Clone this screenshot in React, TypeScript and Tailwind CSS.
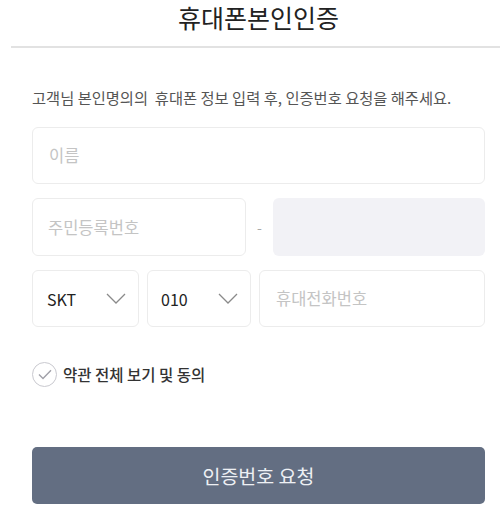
import React from "react";

const Chevron = () => (
  <svg width="20" height="11" viewBox="0 0 20 11" fill="none">
    <polyline points="1,1 10,10 19,1" stroke="#8a8a8a" strokeWidth="1.3" fill="none" />
  </svg>
);

export default function App() {
  return (
    <div
      className="w-[500px] h-[519px] bg-white overflow-hidden"
      style={{ fontFamily: '"Noto Sans CJK KR", "Noto Sans", sans-serif' }}
    >
      <div className="pl-[32px] pr-[15px]">
        <div className="h-[35px] text-center text-[25px] leading-[35px] text-[#222]">
          휴대폰본인인증
        </div>
      </div>
      <div className="ml-[11px] mt-[11px] h-[2px] bg-[#e2e2e2]" />
      <div className="pl-[32px] pr-[15px]">
        <div className="mt-[39px] h-[20px] leading-[20px] text-[15.3px] text-[#555] whitespace-nowrap">
          고객님 본인명의의&nbsp; 휴대폰 정보 입력 후, 인증번호 요청을 해주세요.
        </div>
        <div className="mt-[20px] h-[57px] rounded-[6px] border border-[#ececec] flex items-center pl-[16px] text-[16.5px] text-[#c4c4c4]">
          이름
        </div>
        <div className="mt-[14px] flex items-center h-[58px]">
          <div className="w-[214px] h-full rounded-[6px] border border-[#ececec] flex items-center pl-[15px] text-[16.5px] text-[#c4c4c4]">
            주민등록번호
          </div>
          <div className="w-[27px] flex justify-center text-[14px] text-[#aaa]">-</div>
          <div className="flex-1 h-full rounded-[6px] bg-[#f2f2f6]" />
        </div>
        <div className="mt-[14px] flex h-[57px] gap-[8px]">
          <div className="w-[107px] h-full rounded-[6px] border border-[#ececec] flex items-center justify-between pl-[14px] pr-[12px] text-[16px] text-[#222]">
            <span>SKT</span>
            <Chevron />
          </div>
          <div className="w-[104px] h-full rounded-[6px] border border-[#ececec] flex items-center justify-between pl-[13px] pr-[12px] text-[16px] text-[#222]">
            <span>010</span>
            <Chevron />
          </div>
          <div className="flex-1 h-full rounded-[6px] border border-[#ececec] flex items-center pl-[16px] text-[16.5px] text-[#c4c4c4]">
            휴대전화번호
          </div>
        </div>
        <div className="mt-[35px] h-[25px] flex items-center gap-[6px]">
          <div className="w-[25px] h-[25px] rounded-full border-[1.5px] border-[#c9c9cf] flex items-center justify-center">
            <svg width="14" height="11" viewBox="0 0 14 11" fill="none">
              <polyline points="1,5.5 5,9.5 13,1.3" stroke="#a0a0a8" strokeWidth="1.4" fill="none" />
            </svg>
          </div>
          <span className="text-[15.5px] font-medium text-[#333]">약관 전체 보기 및 동의</span>
        </div>
        <div className="mt-[60px] h-[57px] rounded-[5px] bg-[#636e82] flex items-center justify-center text-[19.5px] text-[#eef0f4]">
          인증번호 요청
        </div>
      </div>
    </div>
  );
}
